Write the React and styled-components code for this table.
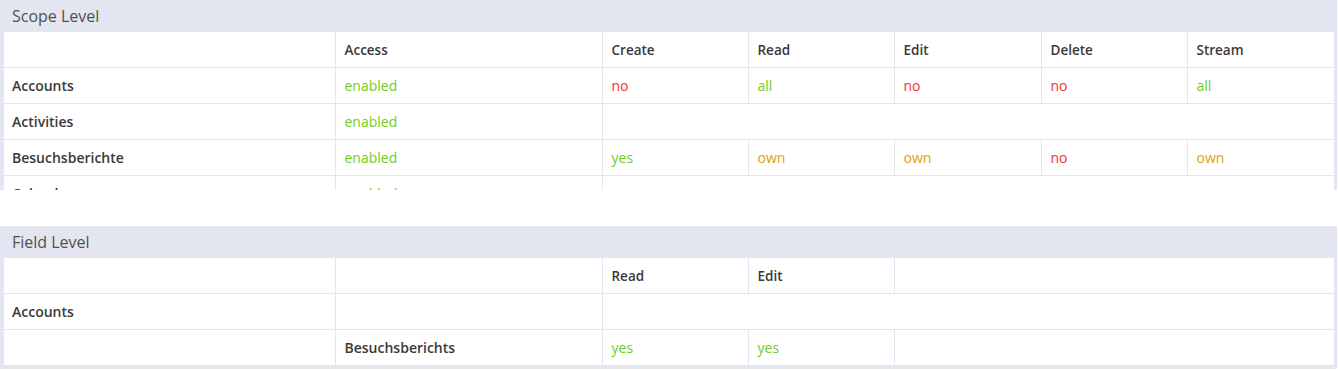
import styled, { createGlobalStyle } from 'styled-components'

const GlobalStyle = createGlobalStyle`
  body {
    margin: 0;
    background: #fff;
    font-family: "Open Sans", "Liberation Sans", sans-serif;
  }
`

const COLORS = {
  green: '#72cc1e',
  red: '#f5303f',
  orange: '#dea00c',
}

const Page = styled.div`
  width: 1338px;
  display: flex;
  flex-direction: column;
  gap: 36px;
`

const Panel = styled.section`
  width: 1337px;
  background: #e3e6f1;
  padding: 0 3px ${(p) => (p.$clipped ? 0 : 3)}px 4px;
  box-sizing: border-box;
  display: flex;
  flex-direction: column;
`

const Title = styled.h3`
  margin: 0;
  height: 32px;
  padding-left: 8px;
  display: flex;
  align-items: center;
  font-size: 16px;
  font-weight: 400;
  color: #505050;
`

const Scroll = styled.div`
  background: #fff;
  height: ${(p) => (p.$height ? `${p.$height}px` : 'auto')};
  overflow: hidden;
`

const Table = styled.table`
  width: 1330px;
  table-layout: fixed;
  border-collapse: collapse;
  background: #fff;
`

const Cell = styled.td`
  height: 35px;
  padding: 0 9px;
  font-size: 14px;
  color: ${(p) => (p.$tone ? COLORS[p.$tone] : '#3a3a3a')};
  font-weight: ${(p) => (p.$bold ? 600 : 400)};
  border-left: 1px solid #e4e5f0;
  border-bottom: 1px solid #e4e5f0;
  white-space: nowrap;
  &:first-child {
    border-left: none;
    padding-left: 8px;
  }
`

const HeadCell = styled(Cell)`
  font-weight: 600;
  font-size: 13.5px;
  color: #3a3a3a;
`

const scopeWidths = [331, 267, 146, 146, 147, 146, 147]
const fieldWidths = [331, 267, 146, 146, 440]

function Cols({ widths }) {
  return (
    <colgroup>
      {widths.map((w, i) => (
        <col key={i} style={{ width: w }} />
      ))}
    </colgroup>
  )
}

const tone = (v) => {
  if (v === 'no') return 'red'
  if (v === 'own') return 'orange'
  return 'green'
}

const scopeRows = [
  { name: 'Accounts', access: 'enabled', vals: ['no', 'all', 'no', 'no', 'all'] },
  { name: 'Activities', access: 'enabled' },
  { name: 'Besuchsberichte', access: 'enabled', vals: ['yes', 'own', 'own', 'no', 'own'] },
  { name: 'Calendar', access: 'enabled' },
]

export default function App() {
  return (
    <>
      <GlobalStyle />
      <Page>
        <Panel $clipped>
          <Title>Scope Level</Title>
          <Scroll $height={158}>
            <Table>
              <Cols widths={scopeWidths} />
              <tbody>
                <tr>
                  <HeadCell />
                  {['Access', 'Create', 'Read', 'Edit', 'Delete', 'Stream'].map((h) => (
                    <HeadCell key={h}>{h}</HeadCell>
                  ))}
                </tr>
                {scopeRows.map((r) => (
                  <tr key={r.name}>
                    <Cell $bold>{r.name}</Cell>
                    <Cell $tone="green">{r.access}</Cell>
                    {r.vals ? (
                      r.vals.map((v, i) => (
                        <Cell key={i} $tone={tone(v)}>{v}</Cell>
                      ))
                    ) : (
                      <Cell colSpan={5} />
                    )}
                  </tr>
                ))}
              </tbody>
            </Table>
          </Scroll>
        </Panel>

        <Panel>
          <Title>Field Level</Title>
          <Scroll>
            <Table>
              <Cols widths={fieldWidths} />
              <tbody>
                <tr>
                  <HeadCell />
                  <HeadCell />
                  <HeadCell>Read</HeadCell>
                  <HeadCell>Edit</HeadCell>
                  <HeadCell />
                </tr>
                <tr>
                  <Cell $bold>Accounts</Cell>
                  <Cell />
                  <Cell colSpan={3} />
                </tr>
                <tr>
                  <Cell />
                  <Cell $bold>Besuchsberichts</Cell>
                  <Cell $tone="green">yes</Cell>
                  <Cell $tone="green">yes</Cell>
                  <Cell />
                </tr>
              </tbody>
            </Table>
          </Scroll>
        </Panel>
      </Page>
    </>
  )
}
